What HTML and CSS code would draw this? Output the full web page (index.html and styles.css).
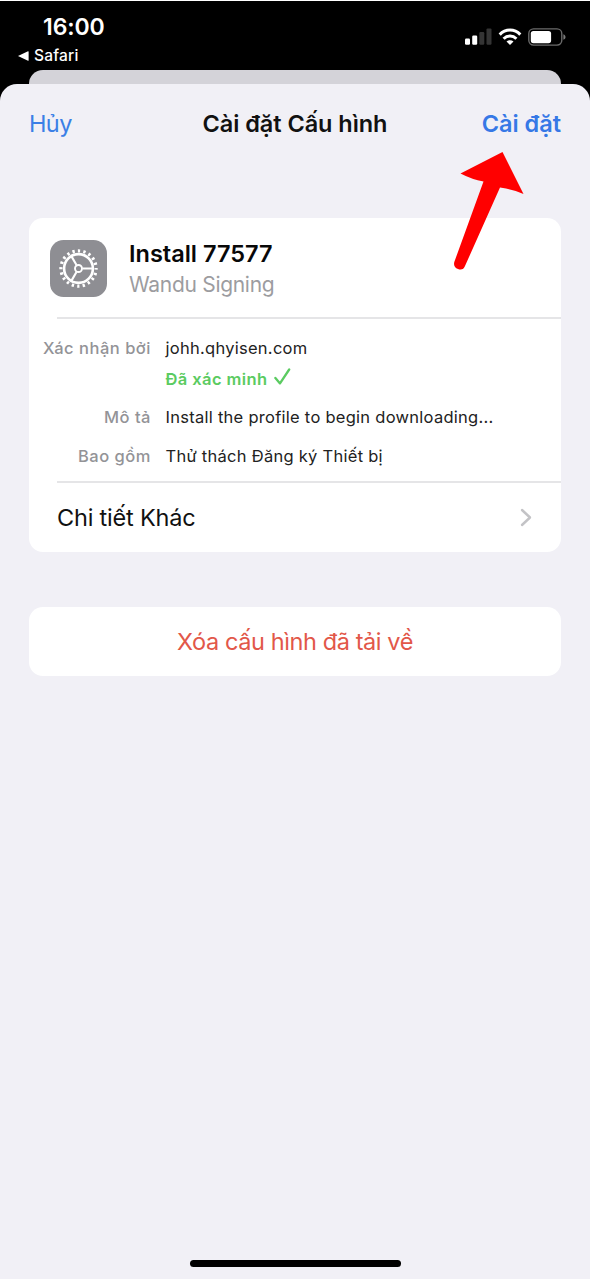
FILE: index.html
```html
<!DOCTYPE html>
<html lang="vi">
<head>
<meta charset="utf-8">
<title>Cài đặt Cấu hình</title>
<link rel="stylesheet" href="styles.css">
</head>
<body>
<div class="phone">
  <header class="status">
    <div class="status-left">
      <div class="clock">16:00</div>
      <div class="back"><svg class="back-arrow" width="11" height="10" viewBox="0 0 11 10"><path d="M0 5 L10 0.2 Q10.6 0 10.6 .8 V9.2 Q10.6 10 10 9.8Z" fill="#fff"/></svg><span>Safari</span></div>
    </div>
    <div class="status-icons">
      <svg width="27" height="18" viewBox="0 0 27 18"><rect x="0" y="10.5" width="5" height="6.2" rx="1.2" fill="#fff"/><rect x="7.2" y="7.5" width="5" height="9.2" rx="1.2" fill="#fff"/><rect x="14.3" y="4" width="5" height="12.7" rx="1.2" fill="#343434"/><rect x="21.5" y=".4" width="5" height="16.3" rx="1.2" fill="#343434"/></svg>
      <svg width="24" height="18" viewBox="0 0 24 18"><g fill="none" stroke="#fff" stroke-width="3"><path d="M1.7 6.6 C7.4 .6 16.6 .6 22.3 6.6"/><path d="M5.6 10.7 C9.2 7.1 14.8 7.1 18.4 10.7"/></g><path d="M8.5 13.5 C10.5 11.8 13.5 11.8 15.5 13.5 L12 17Z" fill="#fff"/></svg>
      <svg width="39" height="18" viewBox="0 0 39 18"><rect x=".8" y=".9" width="33" height="16.2" rx="4.8" fill="none" stroke="#6b6b6b" stroke-width="1.4"/><rect x="2.8" y="2.9" width="20.3" height="12.3" rx="2.6" fill="#fff"/><path d="M35.4 6.2 C38.2 7.2 38.2 10.8 35.4 11.8Z" fill="#7b7b7b"/></svg>
    </div>
  </header>
  <div class="behind"></div>
  <main class="sheet">
    <nav class="nav">
      <a class="cancel">Hủy</a>
      <h1 class="title">Cài đặt Cấu hình</h1>
      <a class="install">Cài đặt</a>
    </nav>
    <section class="card profile">
      <div class="summary">
        <svg class="gear" width="57" height="57" viewBox="-28.5 -28.5 57 57">
          <rect x="-28.5" y="-28.5" width="57" height="57" rx="13.5" fill="#8e8e93"/>
          <g fill="none" stroke="#fff">
            <circle r="17.6" stroke-width="3.2" stroke-dasharray="2.3 3.2292" stroke-dashoffset="1.15"/>
            <circle r="14.4" stroke-width="2.6"/>
            <circle r="3.5" stroke-width="1.9"/>
            <path d="M4 0H14M-2 -3.46L-7 -12.1M-2 3.46L-7 12.1" stroke-width="2.1"/>
          </g>
        </svg>
        <div class="names">
          <div class="name">Install 77577</div>
          <div class="org">Wandu Signing</div>
        </div>
      </div>
      <dl class="details">
        <dt>Xác nhận bởi</dt><dd class="signer">johh.qhyisen.com</dd>
        <dt></dt><dd class="verified"><span>Đã xác minh</span><svg width="17" height="18" viewBox="0 0 17 18"><path d="M1.4 10 L6 15.4 L15.2 1.5" fill="none" stroke="#5bcb61" stroke-width="2.3" stroke-linecap="round" stroke-linejoin="round"/></svg></dd>
        <dt>Mô tả</dt><dd class="desc">Install the profile to begin downloading...</dd>
        <dt>Bao gồm</dt><dd class="includes">Thử thách Đăng ký Thiết bị</dd>
      </dl>
      <div class="more"><span>Chi tiết Khác</span><svg width="12" height="19" viewBox="0 0 12 19"><path d="M2 2 L10 9.5 L2 17" fill="none" stroke="#c3c3c6" stroke-width="2.4" stroke-linecap="round" stroke-linejoin="round"/></svg></div>
    </section>
    <button class="card remove"><span>Xóa cấu hình đã tải về</span></button>
    <div class="home"></div>
  </main>
  <svg class="pointer" width="74" height="126" viewBox="0 0 74 126"><path d="M50.5 6 L71.5 48 Q60 43 48 41.5 L13 120 Q11 125 6 123 Q1 121 2.3 116 L31.5 35.5 Q20 33.5 8.5 27.5Z" fill="#f00"/></svg>
</div>
</body>
</html>
```
FILE: styles.css
```css
* { box-sizing: border-box; margin: 0; }
body { font-family: Inter, "Noto Sans", sans-serif; background: #000; }
.phone { position: relative; width: 590px; height: 1280px; display: flex; flex-direction: column; background: #000; border-top: 1px solid #fff; overflow: hidden; }
.status { height: 69px; display: flex; justify-content: space-between; color: #fff; }
.status-left { padding: 11px 0 0 18px; }
.clock { padding-left: 25px; font-size: 23px; line-height: 30px; font-weight: 600; letter-spacing: -.1px; }
.back { display: flex; align-items: center; gap: 5px; margin-top: 4px; font-size: 15.5px; line-height: 20px; font-weight: 500; letter-spacing: .2px; }
.status-icons { display: flex; gap: 6px; padding: 27px 23px 0 0; }
.behind { flex: none; height: 32px; margin: 0 29px -18px; background: #d4d3d9; border-radius: 14px 14px 0 0; }
.sheet { flex: 1; display: flex; flex-direction: column; background: #f1f0f6; border-radius: 17px 17px 0 0; border-bottom: 1px solid #fff; }
.nav { display: grid; grid-template-columns: 1fr auto 1fr; align-items: center; height: 79px; padding: 0 29px; margin-bottom: 55px; font-size: 23.5px; }
.cancel { color: #3b7fe6; letter-spacing: -.6px; }
.title { font-size: 23.5px; font-weight: 600; color: #111; letter-spacing: -.05px; }
.install { color: #3678e6; font-weight: 600; text-align: right; }
.card { margin: 0 29px; background: #fff; border-radius: 14px; }
.profile { height: 334px; }
.summary { position: relative; height: 100px; display: flex; align-items: center; gap: 22px; padding-left: 21px; }
.summary::after, .more::before { content: ""; position: absolute; left: 28px; right: 0; height: 2px; background: #e5e5e7; }
.summary::after { bottom: -1px; }
.names { padding-top: 2px; }
.name { font-size: 23.5px; line-height: 31px; font-weight: 600; color: #080808; }
.org { font-size: 21px; line-height: 31px; color: #9c9c9f; letter-spacing: -.3px; }
.details { height: 163px; display: grid; grid-template-columns: 122px 1fr; grid-template-rows: 26px 37px 39px 38px; column-gap: 14.5px; padding-top: 16.5px; font-size: 16.5px; line-height: 26px; align-items: center; }
.details dt { text-align: right; color: #939397; font-weight: 500; letter-spacing: .52px; }
.details dd { margin: 0; color: #222; white-space: nowrap; letter-spacing: .27px; }
.details .verified { display: flex; align-items: center; gap: 7px; color: #5bcb61; font-weight: 600; letter-spacing: .4px; }
.verified svg { margin-top: -5px; }
.more { position: relative; height: 71px; display: flex; align-items: center; justify-content: space-between; padding: 2px 29px 0 28px; font-size: 23.5px; color: #111; letter-spacing: -.2px; }
.more::before { top: 0; }
.remove { display: block; height: 69px; margin-top: 55px; border: 0; font: 400 23.5px Inter, "Noto Sans", sans-serif; color: #e25749; letter-spacing: -.4px; }
.home { width: 211px; height: 7px; border-radius: 4px; background: #000; margin: auto auto 12px; }
.pointer { position: absolute; left: 452px; top: 145px; filter: blur(.5px); }
```
